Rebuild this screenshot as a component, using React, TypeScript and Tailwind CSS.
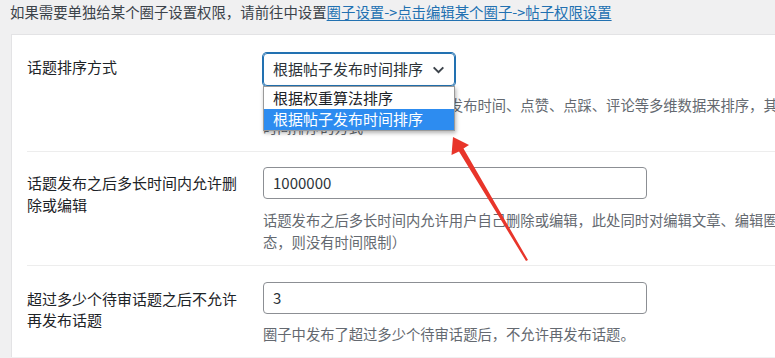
import React from 'react';

const cjk = { fontFamily: '"Noto Sans CJK SC", "Noto Sans", sans-serif' };

const Chevron: React.FC = () => (
  <svg width="15" height="15" viewBox="0 0 14 14" className="shrink-0">
    <path d="M2.5 5 L7 9.5 L11.5 5" fill="none" stroke="#3c434a" strokeWidth="1.8" />
  </svg>
);

const TextInput: React.FC<{ value: string }> = ({ value }) => (
  <div className="flex h-[32px] w-[384px] items-center rounded-[4px] border border-[#8c8f94] bg-white pl-[9px] text-[15px] text-[#2c3338]">
    {value}
  </div>
);

const Desc: React.FC<{ lines: string[]; className?: string }> = ({ lines, className }) => (
  <div className={`text-[14.3px] leading-[22px] text-[#646970] ${className ?? ''}`}>
    {lines.map((l, i) => (
      <div key={i} className="whitespace-nowrap">
        {l}
      </div>
    ))}
  </div>
);

export default function App() {
  return (
    <div className="relative h-[358px] w-[775px] overflow-hidden bg-[#f0f0f1]" style={cjk}>
      <div className="whitespace-nowrap pl-[10px] pt-[1px] text-[14.4px] leading-[22px] text-[#3c434a]">
        如果需要单独给某个圈子设置权限，请前往中设置
        <span className="text-[#2271b1] underline underline-offset-2">圈子设置-&gt;点击编辑某个圈子-&gt;帖子权限设置</span>
      </div>

      <div className="ml-[11px] mt-[11px] w-[1000px] border-l border-t border-[#e3e3e5] bg-white pl-[15px]">
        {/* row 1 */}
        <div className="flex border-b border-[#ededed] pb-[13px] pt-[18px]">
          <div className="w-[236px] shrink-0 pt-[3px] text-[15px] leading-[22px] text-[#1d2327]">
            <div className="w-[215px]">话题排序方式</div>
          </div>
          <div>
            <div className="relative w-[192px]">
              <div className="flex h-[33px] items-center justify-between rounded-[4px] border border-[#2271b1] pl-[9px] pr-[8px] text-[15px] text-[#2c3338] shadow-[0_0_0_1px_#2271b1]">
                <span>根据帖子发布时间排序</span>
                <Chevron />
              </div>
              <div className="absolute left-0 top-[33px] z-10 w-[192px] border border-[#9a9a9a] bg-white text-[15px] text-[#1d2327] shadow-[1px_2px_4px_rgba(0,0,0,0.3)]">
                <div className="flex h-[22px] items-center pl-[9px]">根据权重算法排序</div>
                <div className="flex h-[21px] items-center bg-[#2d8cf0] pl-[9px] text-white">根据帖子发布时间排序</div>
              </div>
            </div>
            <Desc
              className="mt-[8px]"
              lines={[
                '根据权重算法排序综合话题的发布时间、点赞、点踩、评论等多维数据来排序，其他排序则按照',
                '时间排序的方式',
              ]}
            />
          </div>
        </div>

        {/* row 2 */}
        <div className="flex border-b border-[#ededed] pb-[12px] pt-[15px]">
          <div className="w-[236px] shrink-0 pt-[5px] text-[15px] leading-[22px] text-[#1d2327]">
            <div className="w-[215px]">话题发布之后多长时间内允许删除或编辑</div>
          </div>
          <div>
            <TextInput value="1000000" />
            <Desc
              className="mt-[10px]"
              lines={[
                '话题发布之后多长时间内允许用户自己删除或编辑，此处同时对编辑文章、编辑圈子话题生效（如果设置为0或者空状',
                '态，则没有时间限制）',
              ]}
            />
          </div>
        </div>

        {/* row 3 */}
        <div className="flex pb-[12px] pt-[16px]">
          <div className="w-[236px] shrink-0 pt-[6px] text-[15px] leading-[21px] text-[#1d2327]">
            <div className="w-[215px]">超过多少个待审话题之后不允许再发布话题</div>
          </div>
          <div>
            <TextInput value="3" />
            <Desc className="mt-[9px]" lines={['圈子中发布了超过多少个待审话题后，不允许再发布话题。']} />
          </div>
        </div>
      </div>

      <svg className="pointer-events-none absolute left-0 top-0 z-20" width="775" height="358" viewBox="0 0 775 358">
        <polygon
          points="453,137 469,145 463.5,148.5 528,260 526,261 459,151.5 451.5,155"
          fill="#e8352a"
        />
      </svg>
    </div>
  );
}
